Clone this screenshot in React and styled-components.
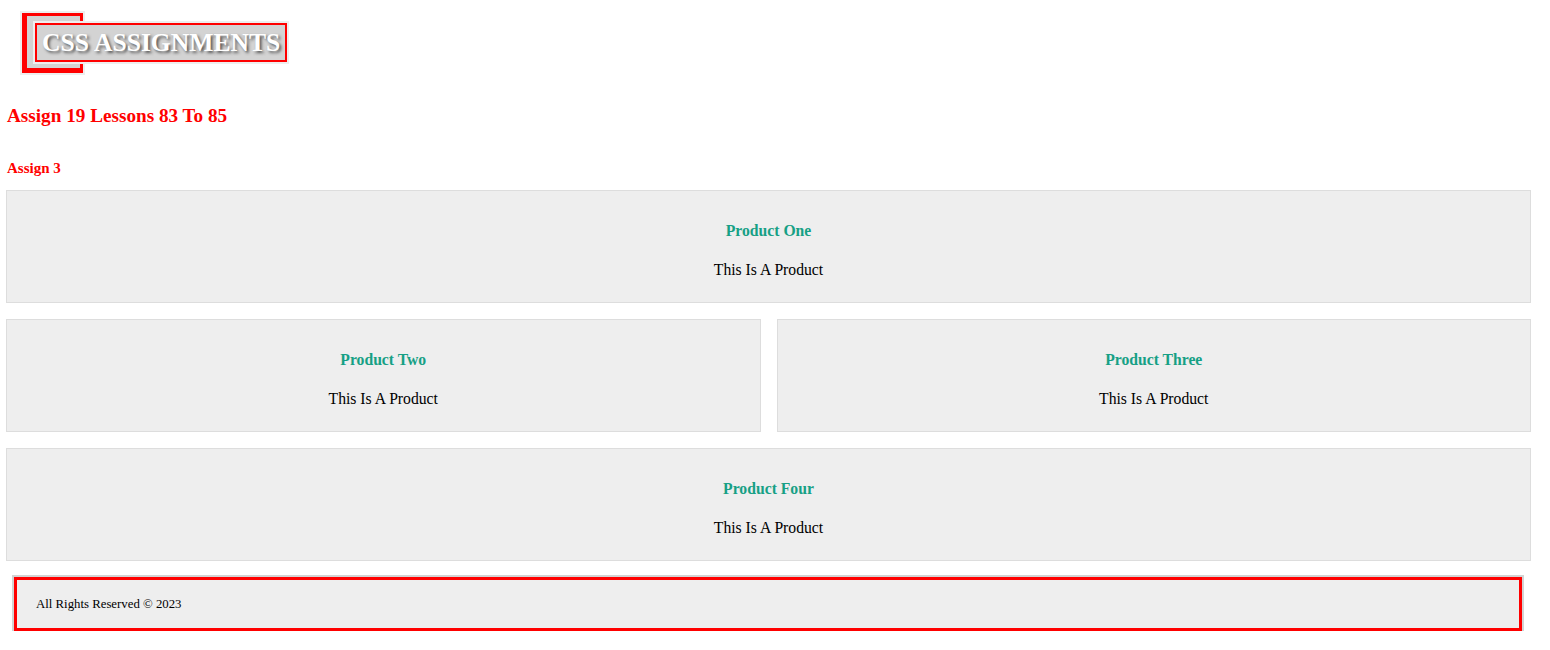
import styled, { createGlobalStyle } from "styled-components";

const GlobalStyle = createGlobalStyle`
  *,
  *::before,
  *::after {
    box-sizing: border-box;
  }
  body {
    margin: 0;
    background: #fff;
    font-family: "Liberation Serif", "Times New Roman", serif;
  }
`;

const products = [
  { title: "Product One", text: "This Is A Product", wide: true },
  { title: "Product Two", text: "This Is A Product" },
  { title: "Product Three", text: "This Is A Product" },
  { title: "Product Four", text: "This Is A Product", wide: true },
];

const App = () => {
  return (
    <>
      <GlobalStyle />
      <Page>
        <Logo>
          <LogoTitle>CSS ASSIGNMENTS</LogoTitle>
        </Logo>
        <Heading>Assign 19 Lessons 83 To 85</Heading>
        <SubHeading>Assign 3</SubHeading>
        <Grid>
          {products.map((p) => (
            <Product key={p.title} $wide={p.wide}>
              <h3>{p.title}</h3>
              <p>{p.text}</p>
            </Product>
          ))}
        </Grid>
        <Footer>All Rights Reserved &copy; 2023</Footer>
      </Page>
    </>
  );
};

const Page = styled.div`
  width: 1531px;
  padding: 0 0 0 6px;
  display: flex;
  flex-direction: column;
  align-items: flex-start;
`;

/* logo with a red bracket behind the title */
const Logo = styled.div`
  position: relative;
  margin: 11px 0 0 14px;
  padding: 12px 0 0 15px;
  &::before {
    content: "";
    position: absolute;
    left: 2px;
    top: 2px;
    width: 61px;
    height: 60px;
    background: #d3d3d3;
    border: 3px solid #ff0000;
    border-left-width: 5px;
    border-bottom-width: 5px;
    box-shadow: 0 0 0 2px #eeeeee;
  }
`;

const LogoTitle = styled.h1`
  position: relative;
  z-index: 1;
  margin: 0;
  padding: 3px 5px 3px 5px;
  font-size: 25.6px;
  line-height: 29px;
  font-weight: 700;
  color: #fff;
  background: #d3d3d3;
  border: 2px solid #ff0000;
  box-shadow: 0 0 0 2px #eeeeee;
  text-shadow: 2px 2px 3px #555;
  white-space: nowrap;
`;

const Heading = styled.h2`
  margin: 43px 0 0 1px;
  font-size: 19.2px;
  line-height: 22px;
  font-weight: 700;
  color: #ff0000;
`;

const SubHeading = styled.h3`
  margin: 32px 0 0 1px;
  font-size: 15px;
  line-height: 18px;
  font-weight: 700;
  color: #ff0000;
`;

const Grid = styled.div`
  margin-top: 13px;
  width: 1525px;
  display: grid;
  grid-template-columns: 1fr 1fr;
  gap: 16px;
`;

const Product = styled.div`
  grid-column: ${(props) => (props.$wide ? "span 2" : "span 1")};
  height: 113px;
  padding-top: 31px;
  background: #eeeeee;
  border: 1px solid #dddddd;
  text-align: center;
  h3 {
    margin: 0;
    font-size: 15.7px;
    line-height: 18px;
    font-weight: 700;
    color: #16a085;
  }
  p {
    margin: 21px 0 0;
    font-size: 15.7px;
    line-height: 18px;
    color: #000;
  }
`;

const Footer = styled.div`
  margin: 16px 0 0 8px;
  width: 1508px;
  height: 54px;
  display: flex;
  align-items: center;
  padding-left: 19px;
  font-size: 12.8px;
  background: #eeeeee;
  border: 3px solid #ff0000;
  box-shadow: 0 0 0 2px #d3d3d3;
`;

export default App;
